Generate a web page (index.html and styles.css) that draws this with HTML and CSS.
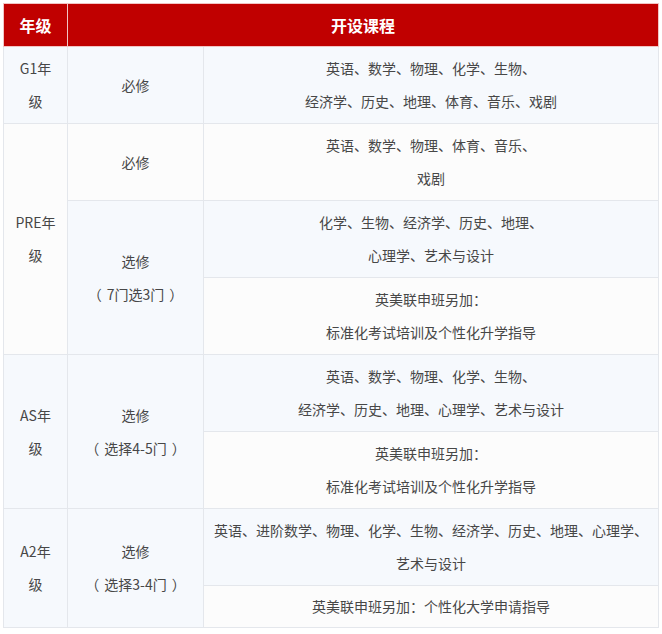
FILE: index.html
```html
<!DOCTYPE html>
<html lang="zh-CN">
<head>
<meta charset="utf-8">
<title>开设课程</title>
<link rel="stylesheet" href="styles.css">
</head>
<body>
<div class="wrap">
<table class="course-table">
  <colgroup>
    <col class="c-grade">
    <col class="c-type">
    <col class="c-course">
  </colgroup>
  <thead>
    <tr>
      <th>年级</th>
      <th colspan="2">开设课程</th>
    </tr>
  </thead>
  <tbody>
    <tr class="odd">
      <td>G1年<br>级</td>
      <td>必修</td>
      <td>英语、数学、物理、化学、生物、<br>经济学、历史、地理、体育、音乐、戏剧</td>
    </tr>
    <tr class="even">
      <td rowspan="3">PRE年<br>级</td>
      <td>必修</td>
      <td>英语、数学、物理、体育、音乐、<br>戏剧</td>
    </tr>
    <tr class="odd">
      <td rowspan="2">选修<br><span class="p-open">（</span>7门选3门<span class="p-close">）</span></td>
      <td>化学、生物、经济学、历史、地理、<br>心理学、艺术与设计</td>
    </tr>
    <tr class="even">
      <td>英美联申班另加：<br>标准化考试培训及个性化升学指导</td>
    </tr>
    <tr class="odd">
      <td rowspan="2">AS年<br>级</td>
      <td rowspan="2">选修<br><span class="p-open">（</span>选择4-5门<span class="p-close">）</span></td>
      <td>英语、数学、物理、化学、生物、<br>经济学、历史、地理、心理学、艺术与设计</td>
    </tr>
    <tr class="even">
      <td>英美联申班另加：<br>标准化考试培训及个性化升学指导</td>
    </tr>
    <tr class="odd">
      <td rowspan="2">A2年<br>级</td>
      <td rowspan="2">选修<br><span class="p-open">（</span>选择3-4门<span class="p-close">）</span></td>
      <td>英语、进阶数学、物理、化学、生物、经济学、历史、地理、心理学、<br>艺术与设计</td>
    </tr>
    <tr class="even">
      <td class="single">英美联申班另加：个性化大学申请指导</td>
    </tr>
  </tbody>
</table>
</div>
</body>
</html>
```
FILE: styles.css
```css
html, body {
  margin: 0;
  padding: 0;
  background: #ffffff;
}
.wrap {
  padding: 3px 3px 0 3px;
}
.course-table {
  border-collapse: collapse;
  width: 656px;
  table-layout: fixed;
  font-family: "Noto Sans CJK SC", "Microsoft YaHei", sans-serif;
  font-size: 14px;
  color: #474747;
}
.p-open {
  margin-right: 5px;
}
.p-close {
  margin-left: 5px;
}
.c-grade { width: 64px; }
.c-type { width: 136px; }
.c-course { width: auto; }
.course-table th {
  background: #c00000;
  color: #ffffff;
  font-size: 16px;
  font-weight: bold;
  line-height: 24px;
  height: 42px;
  padding: 0 5px;
  border: 1px solid #f2c4c4;
  text-align: center;
  vertical-align: middle;
}
.course-table td {
  border: 1px solid #e4e7ec;
  line-height: 33px;
  padding: 5px 4px;
  text-align: center;
  vertical-align: middle;
}
.course-table tr.odd td {
  background: #f6f9fd;
}
.course-table tr.even td {
  background: #fcfcfc;
}
.course-table td.single {
  padding: 4px 4px;
}
```
